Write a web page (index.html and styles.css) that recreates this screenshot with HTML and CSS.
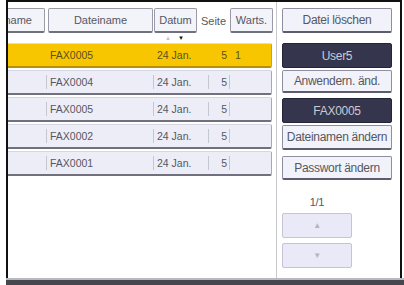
FILE: index.html
```html
<!DOCTYPE html>
<html lang="de">
<head>
    <meta charset="UTF-8">
    <meta name="viewport" content="width=device-width, initial-scale=1.0">
    <title>Datei auswählen</title>
    <link rel="stylesheet" href="styles.css">
</head>
<body>
    <div class="screen">
        <div class="frame">
            <div class="list">
                <div class="list-head">
                    <div class="head-cell head-user"><span>Anwendername</span></div>
                    <div class="head-cell head-file">Dateiname</div>
                    <div class="head-cell head-date">Datum</div>
                    <div class="head-text head-page">Seite</div>
                    <div class="head-cell head-wait">Warts.</div>
                </div>
                <div class="sort">
                    <span class="sort-up">&#9650;</span>
                    <span class="sort-down">&#9660;</span>
                </div>
                <div class="row selected">
                    <div class="cell c-user"></div>
                    <div class="cell c-file">FAX0005</div>
                    <div class="cell c-date">24 Jan.</div>
                    <div class="cell c-page">5</div>
                    <div class="cell c-wait">1</div>
                </div>
                <div class="row">
                    <div class="cell c-user"></div>
                    <div class="cell c-file">FAX0004</div>
                    <div class="cell c-date">24 Jan.</div>
                    <div class="cell c-page">5</div>
                    <div class="cell c-wait"></div>
                </div>
                <div class="row">
                    <div class="cell c-user"></div>
                    <div class="cell c-file">FAX0005</div>
                    <div class="cell c-date">24 Jan.</div>
                    <div class="cell c-page">5</div>
                    <div class="cell c-wait"></div>
                </div>
                <div class="row">
                    <div class="cell c-user"></div>
                    <div class="cell c-file">FAX0002</div>
                    <div class="cell c-date">24 Jan.</div>
                    <div class="cell c-page">5</div>
                    <div class="cell c-wait"></div>
                </div>
                <div class="row">
                    <div class="cell c-user"></div>
                    <div class="cell c-file">FAX0001</div>
                    <div class="cell c-date">24 Jan.</div>
                    <div class="cell c-page">5</div>
                    <div class="cell c-wait"></div>
                </div>
            </div>
            <div class="side">
                <div class="btn btn-delete">Datei löschen</div>
                <div class="label-dark label-user">User5</div>
                <div class="btn btn-attached">Anwendern. änd.</div>
                <div class="label-dark label-file">FAX0005</div>
                <div class="btn btn-attached btn-tall">Dateinamen ändern</div>
                <div class="btn btn-pass">Passwort ändern</div>
                <div class="pager">1/1</div>
                <div class="scroll">&#9650;</div>
                <div class="scroll">&#9660;</div>
            </div>
        </div>
        <div class="bottom-bar"></div>
    </div>
</body>
</html>
```

FILE: styles.css
```css
* {
    box-sizing: border-box;
}

body {
    margin: 0;
    background: #fff;
    font-family: 'Liberation Sans', Arial, sans-serif;
    color: #55585e;
}

.screen {
    width: 404px;
    height: 285px;
    overflow: hidden;
}

.frame {
    display: flex;
    margin-left: 6px;
    width: 396px;
    height: 278px;
    border-top: 2px solid #111;
    border-left: 2px solid #111;
    border-right: 2px solid #111;
}

.list {
    width: 269px;
    padding-top: 6px;
    border-right: 1px solid #c8c8ce;
}

.list-head {
    display: flex;
    height: 25px;
    font-size: 11px;
}

.head-cell {
    display: flex;
    align-items: center;
    justify-content: center;
    background: #f3f3fa;
    border: 1px solid #9a9aa8;
    border-bottom: 2px solid #70707e;
    border-radius: 2px;
    white-space: nowrap;
    overflow: hidden;
}

.head-user {
    width: 37px;
    justify-content: flex-end;
    padding-right: 12px;
    border-left: none;
    border-radius: 0 2px 2px 0;
}

.head-file {
    width: 105px;
    margin-left: 3px;
}

.head-date {
    width: 43px;
    margin-left: 1px;
}

.head-text {
    display: flex;
    align-items: center;
    justify-content: center;
    width: 31px;
    margin-left: 1px;
}

.head-wait {
    width: 43px;
    margin-left: 1px;
}

.sort {
    display: flex;
    height: 10px;
    padding-left: 157px;
    padding-top: 2px;
    font-size: 6px;
    line-height: 6px;
}

.sort-up {
    color: #c4c4cc;
}

.sort-down {
    color: #111;
    margin-left: 7px;
}

.row {
    display: flex;
    align-items: center;
    width: 264px;
    height: 25px;
    margin-bottom: 2px;
    background: #ededf8;
    border-top: 1px solid #d6d6e2;
    border-right: 1px solid #a8a8b6;
    border-bottom: 2px solid #70707e;
    border-radius: 0 2px 2px 0;
    font-size: 10.5px;
}

.row.selected {
    background: #f7c600;
    border-top-color: #fbe07a;
    border-right-color: #d3a600;
    border-bottom-color: #b89000;
    color: #5a5020;
}

.cell {
    height: 14px;
    line-height: 14px;
    white-space: nowrap;
}

.c-user {
    width: 38px;
}

.c-file {
    width: 107px;
    padding-left: 3px;
    border-left: 1px solid #c6c6d0;
}

.c-date {
    width: 55px;
    padding-left: 3px;
    border-left: 1px solid #c6c6d0;
}

.c-page {
    width: 22px;
    padding-right: 2px;
    text-align: right;
    border-left: 1px solid #c6c6d0;
    border-right: 1px solid #c6c6d0;
}

.c-wait {
    padding-left: 5px;
}

.row.selected .cell {
    border-color: transparent;
}

.side {
    display: flex;
    flex-direction: column;
    padding-top: 6px;
    padding-left: 5px;
    font-size: 12px;
    letter-spacing: -0.3px;
}

.btn,
.label-dark {
    display: flex;
    align-items: center;
    justify-content: center;
    width: 110px;
    height: 25px;
    border-radius: 2px;
    white-space: nowrap;
}

.btn {
    background: #f2f2fb;
    border: 1px solid #8e8ea0;
    border-bottom: 2px solid #5c5c6c;
}

.label-dark {
    background: #35354e;
    border: 1px solid #25253a;
    color: #c9c9d4;
}

.label-user {
    margin-top: 10px;
}

.label-file {
    margin-top: 5px;
}

.btn-attached {
    margin-top: 2px;
    height: 23px;
}

.btn-tall {
    height: 25px;
}

.btn-pass {
    margin-top: 6px;
    height: 24px;
}

.pager {
    width: 70px;
    margin-top: 16px;
    height: 17px;
    text-align: center;
    font-size: 11px;
}

.scroll {
    display: flex;
    align-items: center;
    justify-content: center;
    width: 70px;
    height: 25px;
    margin-bottom: 5px;
    background: #e9e9f8;
    border: 1px solid #c4c4d4;
    border-radius: 2px;
    color: #b4b4bc;
    font-size: 8px;
}

.bottom-bar {
    margin-left: 6px;
    height: 7px;
    background: #46464e;
    border-top: 2px solid #b8b8c0;
}
```
